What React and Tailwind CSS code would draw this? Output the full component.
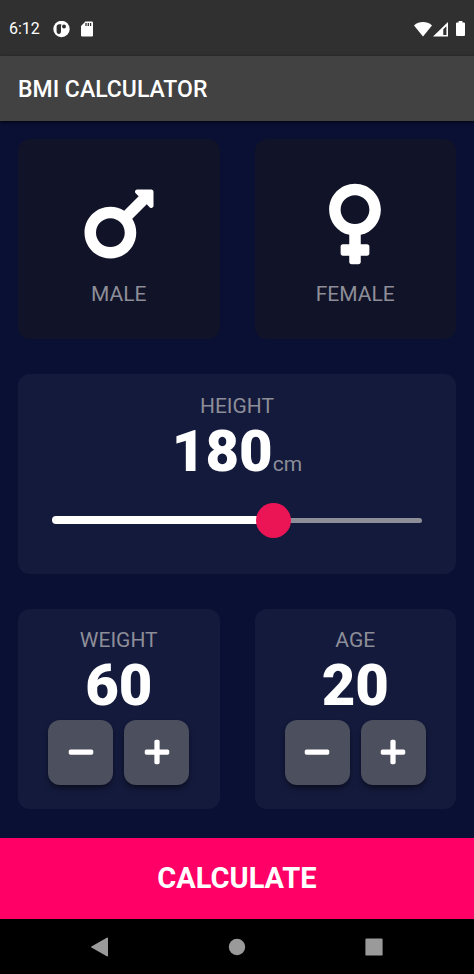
import React, { useState } from "react";
import { FaMars, FaVenus, FaMinus, FaPlus } from "react-icons/fa";

const MIN_HEIGHT = 120;
const MAX_HEIGHT = 220;

const StatusBar = () => (
  <div className="h-14 px-[9px] pt-0.5 flex items-center justify-between bg-[#303030] text-white">
    <div className="flex items-center">
      <span className="text-base leading-5">6:12</span>
      {/* Running app */}
      <svg className="ml-[13px] size-[17px]" viewBox="0 0 17 17">
        <circle cx="8.5" cy="8" r="8.2" fill="#fff" />
        <path
          d="M8.4 3.2H6.2C4.5 3.2 3.6 4.2 3.6 5.6v5c0 1.5.9 2.5 2.2 2.5s2.2-1 2.2-2.5V5.4z"
          fill="#303030"
        />
        <circle cx="11" cy="5.4" r="2" fill="#303030" />
      </svg>
      {/* SD card */}
      <svg className="ml-[11px] h-4 w-3" viewBox="0 0 12 16">
        <path
          d="M4.4 0.5H10.7A1.3 1.3 0 0 1 12 1.8V14.2A1.3 1.3 0 0 1 10.7 15.5H1.3A1.3 1.3 0 0 1 0 14.2V4.9z"
          fill="#fff"
        />
        <path d="M5 2v3M7.3 2v3M9.6 2v3" stroke="#303030" strokeWidth="1.3" />
      </svg>
    </div>

    <div className="flex items-center">
      <svg className="h-[15px] w-[18px]" viewBox="0 0 18 15">
        <path d="M9 14.4L0 3.4C2.6 1.2 5.7 0.1 9 0.1s6.4 1.1 9 3.3z" fill="#fff" />
      </svg>
      <svg className="ml-px size-[15px]" viewBox="0 0 15 15">
        <path
          d="M15 0v14.4H0zM13.4 4.2L10.3 7.2v5.8h3.1z"
          fill="#fff"
          fillRule="evenodd"
        />
      </svg>
      <svg className="ml-2 h-4 w-[9px]" viewBox="0 0 9 16">
        <path
          d="M2.6 0h3.8v1.4h1.5q1.1 0 1.1 1.1v11.5q0 1.1-1.1 1.1H1.1Q0 15.1 0 14V2.5q0-1.1 1.1-1.1h1.5z"
          fill="#fff"
        />
      </svg>
    </div>
  </div>
);

const GenderCard = ({ icon: Icon, label, onClick }) => (
  <button
    onClick={onClick}
    className="pt-1.5 flex flex-col items-center justify-center gap-3 rounded-xl bg-[#111328]"
  >
    <Icon className="h-[92px] w-[70px] text-white" />
    <span className="text-[21px] leading-6 text-[#8d8e98]">{label}</span>
  </button>
);

const RoundButton = ({ icon: Icon, label, onClick }) => (
  <button
    aria-label={label}
    onClick={onClick}
    className="size-[65px] flex items-center justify-center rounded-xl bg-[#4c4f5e] text-white shadow-md shadow-black/40"
  >
    <Icon className="size-7" />
  </button>
);

const CounterCard = ({ label, value, setValue }) => (
  <section className="pb-1.5 flex flex-col items-center justify-center rounded-xl bg-[#141a3c]">
    <h2 className="text-[21px] leading-6 text-[#8d8e98]">{label}</h2>
    <span className="text-[58px] leading-[66px] font-black">{value}</span>
    <div className="mt-0.5 flex gap-[11px]">
      <RoundButton icon={FaMinus} label={`Decrease ${label}`} onClick={() => setValue(value - 1)} />
      <RoundButton icon={FaPlus} label={`Increase ${label}`} onClick={() => setValue(value + 1)} />
    </div>
  </section>
);

const HeightCard = ({ height, setHeight }) => {
  const percent = ((height - MIN_HEIGHT) / (MAX_HEIGHT - MIN_HEIGHT)) * 100;

  return (
    <section className="col-span-2 px-[17px] pb-1.5 flex flex-col justify-center rounded-xl bg-[#141a3c]">
      <label htmlFor="height" className="text-center text-[21px] leading-6 text-[#8d8e98]">
        HEIGHT
      </label>
      <div className="flex items-baseline justify-center">
        <span className="text-[58px] leading-[66px] font-black">{height}</span>
        <span className="text-[21px] leading-6 text-[#8d8e98]">cm</span>
      </div>

      <div className="relative mt-2 h-14">
        {/* Track */}
        <div className="absolute inset-x-[17px] inset-y-0 flex items-center">
          <div className="h-2 rounded-full bg-white" style={{ width: `${percent}%` }} />
          <div className="h-[5px] flex-1 rounded-r-full bg-[#8d8e98]" />
        </div>
        <input
          id="height"
          type="range"
          min={MIN_HEIGHT}
          max={MAX_HEIGHT}
          value={height}
          onChange={(e) => setHeight(Number(e.target.value))}
          className="absolute inset-0 h-full w-full appearance-none bg-transparent [&::-webkit-slider-thumb]:size-[35px] [&::-webkit-slider-thumb]:appearance-none [&::-webkit-slider-thumb]:rounded-full [&::-webkit-slider-thumb]:bg-[#eb1555]"
        />
      </div>
    </section>
  );
};

const NavigationBar = () => (
  <nav className="h-[55px] flex items-center justify-center gap-[113px] bg-black text-[#9a9a9a]">
    <button aria-label="Back">
      <svg className="size-6" viewBox="0 0 24 24" fill="currentColor">
        <path d="M3.4 11.4L18.8 2.7q1.2-.6 1.2.6v17.4q0 1.2-1.2.6L3.4 12.6q-.9-.6 0-1.2z" />
      </svg>
    </button>
    <button aria-label="Home">
      <svg className="size-6" viewBox="0 0 24 24" fill="currentColor">
        <circle cx="12" cy="12" r="8.2" />
      </svg>
    </button>
    <button aria-label="Recent apps">
      <svg className="size-6" viewBox="0 0 24 24" fill="currentColor">
        <rect x="3.4" y="3.4" width="17.2" height="17.2" rx="1.2" />
      </svg>
    </button>
  </nav>
);

const App = () => {
  const [, setGender] = useState(null);
  const [height, setHeight] = useState(180);
  const [weight, setWeight] = useState(60);
  const [age, setAge] = useState(20);

  return (
    <div className="min-h-screen flex flex-col bg-[#0a1033] font-[Roboto,sans-serif] text-white">
      <StatusBar />

      <header className="h-[65px] px-[18px] pt-0.5 flex items-center bg-[#424242] shadow-sm shadow-black/60">
        <h1 className="text-[23px] leading-7 font-medium">BMI CALCULATOR</h1>
      </header>

      <main className="flex-1 px-[18px] pt-[18px] pb-[29px] grid grid-cols-2 grid-rows-3 gap-[35px]">
        <GenderCard icon={FaMars} label="MALE" onClick={() => setGender("male")} />
        <GenderCard icon={FaVenus} label="FEMALE" onClick={() => setGender("female")} />
        <HeightCard height={height} setHeight={setHeight} />
        <CounterCard label="WEIGHT" value={weight} setValue={setWeight} />
        <CounterCard label="AGE" value={age} setValue={setAge} />
      </main>

      <button className="h-[81px] pb-0.5 bg-[#ff0067] text-[29px] leading-8 font-bold">
        CALCULATE
      </button>

      <NavigationBar />
    </div>
  );
};

export default App;
